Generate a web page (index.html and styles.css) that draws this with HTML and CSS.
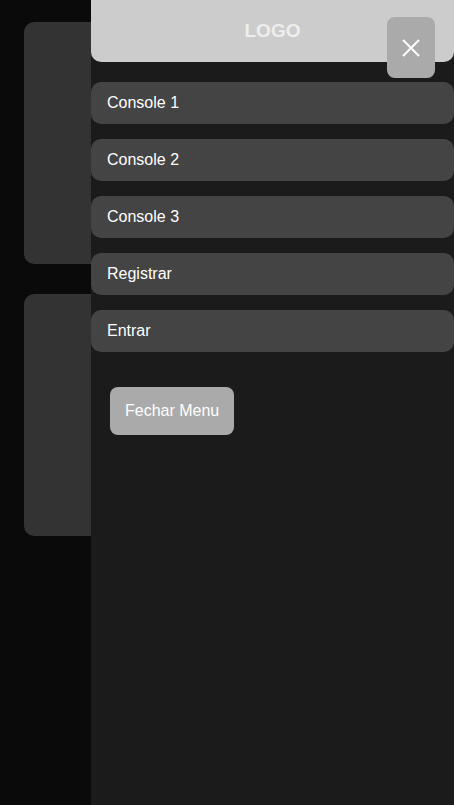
FILE: index.html
```html
<!DOCTYPE html>
<html lang="pt">
<head>
<meta charset="utf-8">
<link rel="stylesheet" href="styles.css">
</head>
<body>
<main class="content">
  <div class="card"></div>
  <div class="card"></div>
</main>
<aside class="sidebar">
  <div class="logo">LOGO</div>
  <button class="close" aria-label="Fechar">
    <svg width="18" height="18" viewBox="0 0 18 18"><path d="M1 1L17 17M17 1L1 17" stroke="#fff" stroke-width="2" fill="none"/></svg>
  </button>
  <nav class="menu">
    <a class="item">Console 1</a>
    <a class="item">Console 2</a>
    <a class="item">Console 3</a>
    <a class="item">Registrar</a>
    <a class="item">Entrar</a>
  </nav>
  <button class="fechar">Fechar Menu</button>
</aside>
</body>
</html>
```
FILE: styles.css
```css
html, body {
  margin: 0;
  padding: 0;
  background: #0a0a0a;
  font-family: "Liberation Sans", Arial, sans-serif;
  height: 100%;
  overflow: hidden;
}
.content {
  padding: 22px 0 0 24px;
  display: flex;
  flex-direction: column;
  gap: 30px;
}
.card {
  height: 242px;
  width: 300px;
  background: #333;
  border-radius: 10px;
}
.sidebar {
  position: fixed;
  top: 0;
  left: 91px;
  width: 363px;
  height: 100%;
  background: #1b1b1b;
}
.logo {
  height: 61.5px;
  background: #ccc;
  border-radius: 0 0 10px 10px;
  color: #eee;
  font-weight: bold;
  font-size: 19px;
  display: flex;
  align-items: center;
  justify-content: center;
}
.close {
  position: absolute;
  top: 17px;
  left: 296px;
  width: 48px;
  height: 61px;
  background: #aaa;
  border: none;
  border-radius: 8px;
  padding: 0;
  display: flex;
  align-items: center;
  justify-content: center;
}
.menu {
  display: flex;
  flex-direction: column;
  gap: 14.5px;
  margin-top: 20px;
}
.item {
  display: block;
  background: #444;
  color: #fff;
  font-size: 16px;
  line-height: 18px;
  padding: 12px 16px 12px;
  border-radius: 10px;
  height: 18.5px;
}
.fechar {
  margin: 34.5px 0 0 19px;
  background: #aaa;
  color: #fff;
  border: none;
  border-radius: 8px;
  font-family: "Liberation Sans", Arial, sans-serif;
  font-size: 16px;
  line-height: 18px;
  height: 48px;
  padding: 0 15px;
}
```
